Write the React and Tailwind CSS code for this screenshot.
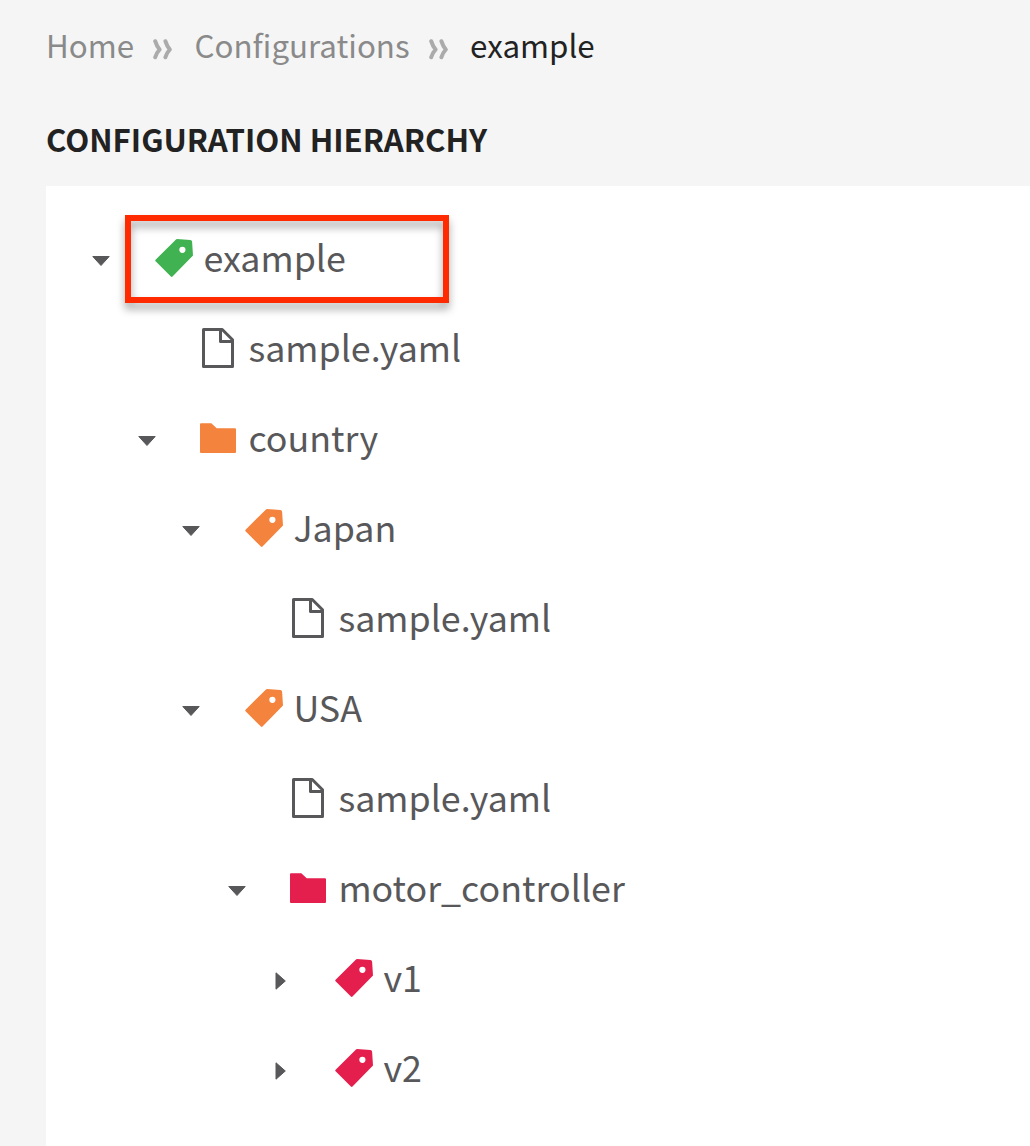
const tree = [
  { depth: 0, kind: 'tag', color: 'text-[#41b252]', arrow: 'down', label: 'example', marked: true },
  { depth: 1, kind: 'file', color: 'text-[#58585a]', label: 'sample.yaml' },
  { depth: 1, kind: 'folder', color: 'text-[#f4833d]', arrow: 'down', label: 'country' },
  { depth: 2, kind: 'tag', color: 'text-[#f4833d]', arrow: 'down', label: 'Japan' },
  { depth: 3, kind: 'file', color: 'text-[#58585a]', label: 'sample.yaml' },
  { depth: 2, kind: 'tag', color: 'text-[#f4833d]', arrow: 'down', label: 'USA' },
  { depth: 3, kind: 'file', color: 'text-[#58585a]', label: 'sample.yaml' },
  { depth: 3, kind: 'folder', color: 'text-[#e41f4d]', arrow: 'down', label: 'motor_controller' },
  { depth: 4, kind: 'tag', color: 'text-[#e41f4d]', arrow: 'right', label: 'v1' },
  { depth: 4, kind: 'tag', color: 'text-[#e41f4d]', arrow: 'right', label: 'v2' },
];

const indents = ['pl-[37px]', 'pl-[83px]', 'pl-[127px]', 'pl-[173px]', 'pl-[217px]'];
const iconGaps = ['ml-9 w-[48.4px]', 'ml-[33px] w-[50.4px]', 'ml-9 w-[48.4px]', 'ml-[33px] w-[50.4px]', 'ml-9 w-[48.4px]'];

function Icon({ kind }) {
  return (
    <svg width="40" height="44" viewBox="0 0 40 44" fill="currentColor">
      {kind === 'tag' && (
        <path
          fillRule="evenodd"
          d="M22 2 35.3 2.9Q37 3 37.1 4.7L38 18.6 17.5 39.5Q16.7 40.3 15.9 39.5L.6 24.3Q-.2 23.5.6 22.7L21 2.4Q21.4 2 22 2ZM27.4 9.7a3.1 3.1 0 1 0 0 6.2 3.1 3.1 0 0 0 0-6.2Z"
        />
      )}
      {kind === 'folder' && (
        <path d="M2 6.2H13.3L18.7 11.3H37Q38 11.3 38 12.3V35Q38 36 37 36H3Q2 36 2 35V7.2Q2 6.2 3 6.2Z" />
      )}
      {kind === 'file' && (
        <path
          fill="none"
          stroke="currentColor"
          strokeWidth="3"
          strokeLinejoin="round"
          d="M5.5 2.5H24.2L34.5 12.8V39.5H5.5ZM22.5 2.5V14.5H34.5"
        />
      )}
    </svg>
  );
}

function Arrow({ dir }) {
  if (!dir) return null;
  return (
    <svg width="20" height="20" viewBox="0 0 20 20" fill="#58585a" stroke="#58585a" strokeWidth="1" strokeLinejoin="round">
      {dir === 'down' ? <path d="M1.8 6.5H18.2L10 15.5Z" /> : <path d="M5 2.8V19.2L14.3 11Z" />}
    </svg>
  );
}

function Separator() {
  return (
    <svg width="20" height="22" viewBox="0 0 20 22" fill="none" stroke="#ababab" strokeWidth="4" strokeLinecap="round" strokeLinejoin="round">
      <path d="M2.2 3.2C3.2 6.5 4.8 9.3 6.6 11.5C4.8 13.5 3.2 15.5 2.2 19.2M12.4 3.2C13.4 6.5 15 9.3 16.8 11.5C15 13.5 13.4 15.5 12.4 19.2" />
    </svg>
  );
}

function Row({ depth, kind, color, arrow, label, marked }) {
  return (
    <li className={`relative flex h-[90px] items-center ${indents[depth]}`}>
      <span className="flex w-9 justify-center">
        <Arrow dir={arrow} />
      </span>
      <span className={`flex shrink-0 pb-0.5 ${iconGaps[depth]} ${color}`}>
        <Icon kind={kind} />
      </span>
      <span className="whitespace-pre pb-[9px] text-[35.8px] leading-[52px] text-[#58585a]">{label}</span>
      {marked && (
        <span className="absolute left-[79px] top-0 h-[88px] w-[324px] border-[6px] border-[#ff2a00] drop-shadow-[0_6px_4px_rgba(0,0,0,0.35)]" />
      )}
    </li>
  );
}

export default function App() {
  return (
    <main className="h-[1146px] w-[1030px] overflow-hidden bg-[#f5f5f5] pl-[46px] font-['Noto_Sans_CJK_SC',sans-serif]">
      <nav className="flex h-[94px] items-center pb-1 text-[31.3px] leading-[46px] text-[#8a8a8a]">
        <span>Home</span>
        <span className="ml-[19px] mr-[21.5px] pt-2"><Separator /></span>
        <span>Configurations</span>
        <span className="ml-[19.5px] mr-[21px] pt-2"><Separator /></span>
        <span className="text-[#222]">example</span>
      </nav>
      <h1 className="h-[92px] pt-[22px] text-[31.2px] font-bold leading-[46px] text-[#222]">CONFIGURATION HIERARCHY</h1>
      <ul className="h-[960px] bg-white pt-[29px]">
        {tree.map((item, i) => (
          <Row key={i} {...item} />
        ))}
      </ul>
    </main>
  );
}
